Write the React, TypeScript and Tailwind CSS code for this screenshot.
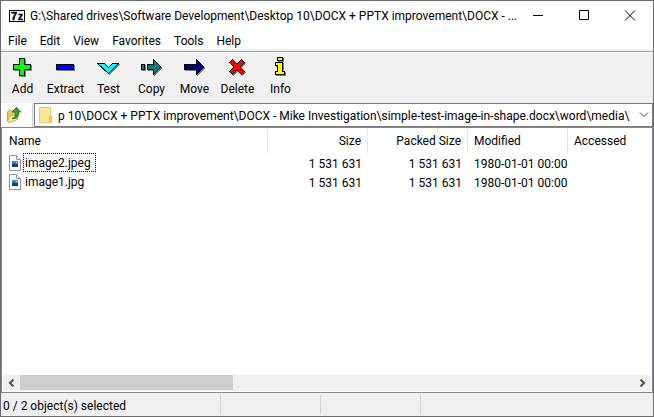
import { useState, type ReactNode } from "react";

const MENU = ["File", "Edit", "View", "Favorites", "Tools", "Help"];

const TOOLS = [
  { label: "Add", fill: "#00ff00", d: "M9.5 2.5h5v6h6v5h-6v6h-5v-6h-6v-5h6z" },
  { label: "Extract", fill: "#0000ff", d: "M3.5 8.5h17v5h-17z" },
  { label: "Test", fill: "#00ffff", d: "M1.5 7.5h7l4 4l4 -4h6l-10 10z" },
  { label: "Copy", fill: "#008080", d: "M2.5 8.5h3v5h-3zM8.5 8.5h6v-5l7 7v1l-7 7v-5h-6z" },
  { label: "Move", fill: "#000080", d: "M2.5 8.5h12v-5l7 7v1l-7 7v-5h-12z" },
  {
    label: "Delete",
    fill: "#ff0000",
    d: "M4.5 6.5l3 -3l4.5 4.5l4.5 -4.5l3 3l-4.5 4.5l4.5 4.5l-3 3l-4.5 -4.5l-4.5 4.5l-3 -3l4.5 -4.5z",
  },
  { label: "Info", fill: "#ffff00", d: "M9.5 1.5h5v3h-5zM7.5 6.5h7v9h2v3h-9v-3h2v-6h-2z" },
];

const FILES = [
  { name: "image2.jpeg", size: "1 531 631", packed: "1 531 631", modified: "1980-01-01 00:00" },
  { name: "image1.jpg", size: "1 531 631", packed: "1 531 631", modified: "1980-01-01 00:00" },
];

function ToolIcon({ d, fill }: { d: string; fill: string }) {
  return (
    <svg width="25" height="25" viewBox="0 0 25 25" shapeRendering="crispEdges" aria-hidden="true">
      <path d={d} fill="#808080" stroke="#808080" transform="translate(1 1)" />
      <path d={d} fill={fill} stroke="#000" />
    </svg>
  );
}

function AppIcon() {
  return (
    <svg width="16" height="16" viewBox="0 0 16 16" className="shrink-0" aria-hidden="true">
      <path d="M.5 2.500h15v11H.5z" fill="#fff" stroke="#000" shapeRendering="crispEdges" />
      <g fill="#000" stroke="#000" strokeWidth=".5" className="font-['Liberation_Sans',sans-serif] font-bold">
        <text x="2" y="12" fontSize="11">7</text>
        <text x="9" y="12" fontSize="10">z</text>
      </g>
    </svg>
  );
}

function FileIcon() {
  return (
    <svg width="12" height="16" viewBox="0 0 12 16" className="shrink-0" aria-hidden="true">
      <path d="M.5.5h7l4 4v11H.5z" fill="#fff" stroke="#929292" />
      <path d="M7.500.5v4h4" fill="#f2f2f2" stroke="#929292" />
      <path d="M3 6h6v6H3z" fill="#2f8fdc" />
      <path d="M3 12V9.500l2-1.500 2 1.500 1-1 1 1V12z" fill="#123f78" />
      <path d="M7 7h1v1H7z" fill="#d8f0ff" />
    </svg>
  );
}

function FolderUpIcon() {
  return (
    <svg width="16" height="18" viewBox="0 0 16 18" aria-hidden="true">
      <path d="M1.500 5.500l4-1.500 1 1.500 5-.5v8l-8 3.500-2-1z" fill="#efc95c" stroke="#cfa03a" />
      <path d="M1.500 15.500l2.500-6 8.500-1.500-2 6-7 2.500z" fill="#fbe9a0" stroke="#d5a93f" />
      <path d="M6 12.500c3.500-.5 3.500-3.500 3-6.500H6l4.500-4.500L14.500 6H12.500c.5 4-1 7-6.500 6.500z" fill="#35a52f" stroke="#1c7a22" />
    </svg>
  );
}

function FolderIcon() {
  return (
    <svg width="14" height="16" viewBox="0 0 14 16" className="shrink-0" aria-hidden="true">
      <path d="M.5.5h11v9h1v6H.5z" fill="#ffe594" stroke="#eccb6c" />
      <path d="M10.500 9.500h2v6h-2z" fill="#f7d775" stroke="#e5bd55" />
    </svg>
  );
}

function CaptionButton({ label, children }: { label: string; children: ReactNode }) {
  return (
    <button aria-label={label} className="flex w-[46px] items-center justify-center hover:bg-[#e5e5e5]">
      <svg width="12" height="12" viewBox="0 0 12 12" fill="none" stroke="#000" aria-hidden="true">
        {children}
      </svg>
    </button>
  );
}

export default function App() {
  const [path, setPath] = useState(
    "p 10\\DOCX + PPTX improvement\\DOCX - Mike Investigation\\simple-test-image-in-shape.docx\\word\\media\\",
  );
  const [focused, setFocused] = useState("image2.jpeg");

  const headClass = "border-r border-[#e5e5e5] py-0 px-[6px] font-normal";
  const cellClass = "px-[6px] pt-[2px] pb-0 leading-4 whitespace-nowrap";

  return (
    <main className="flex h-screen flex-col overflow-hidden border border-[#6b6b6b] bg-[#f0f0f0] font-['Roboto','Liberation_Sans',sans-serif] text-xs text-black">
      <header className="flex h-[30px] shrink-0 bg-white pl-2">
        <div className="flex min-w-0 flex-1 items-center gap-[5px] whitespace-nowrap">
          <AppIcon />
          <h1>G:\Shared drives\Software Development\Desktop 10\DOCX + PPTX improvement\DOCX - ...</h1>
        </div>
        <div className="flex shrink-0">
          <CaptionButton label="Minimize"><path d="M1 5.500h10" /></CaptionButton>
          <CaptionButton label="Maximize"><path d="M1.500.5h9v9h-9z" /></CaptionButton>
          <CaptionButton label="Close"><path d="M1 .5l10 10M11 .5l-10 10" /></CaptionButton>
        </div>
      </header>

      <nav className="flex h-[18px] shrink-0 items-end gap-[13px] bg-white px-[7px]">
        {MENU.map((item) => (
          <button key={item} className="leading-4 hover:bg-[#e5f3ff]">{item}</button>
        ))}
      </nav>

      <div className="mt-[2px] flex h-[52px] shrink-0 border-t border-[#a0a0a0]">
        <div className="flex flex-1 border-t border-white pt-[3px]">
          {TOOLS.map((tool) => (
            <button key={tool.label} className="flex w-[43px] flex-col items-center leading-4 hover:bg-[#e5f3ff]">
              <ToolIcon d={tool.d} fill={tool.fill} />
              {tool.label}
            </button>
          ))}
        </div>
      </div>

      <div className="flex h-6 shrink-0">
        <button aria-label="Up One Level" className="mr-px flex w-8 items-center justify-start border-r border-[#d0d0d0] bg-white pl-[5px]">
          <FolderUpIcon />
        </button>
        <div className="flex min-w-0 flex-1 items-center border border-[#7a7a7a] bg-white pl-1">
          <FolderIcon />
          <input
            aria-label="Path"
            value={path}
            onChange={(event) => setPath(event.target.value)}
            className="ml-[5px] min-w-0 flex-1 bg-transparent pt-px outline-none"
          />
          <button aria-label="Show path list" className="flex w-4 items-center justify-center self-stretch">
            <svg width="10" height="6" viewBox="0 0 10 6" fill="none" stroke="#444" aria-hidden="true">
              <path d="M1 .5l4 4l4 -4" />
            </svg>
          </button>
        </div>
      </div>

      <section className="flex min-h-0 flex-1 flex-col border border-[#828790] bg-white pt-px">
        <div className="min-h-0 flex-1 overflow-hidden">
          <table className="w-full min-w-[700px] table-fixed border-separate border-spacing-0 text-left">
            <colgroup>
              <col className="w-[266px]" />
              <col className="w-[100px]" />
              <col className="w-[100px]" />
              <col className="w-[100px]" />
              <col />
            </colgroup>
            <thead>
              <tr className="h-6">
                <th className={`${headClass} pl-[7px]`}>Name</th>
                <th className={`${headClass} text-right`}>Size</th>
                <th className={`${headClass} text-right`}>Packed Size</th>
                <th className={headClass}>Modified</th>
                <th className={headClass}>Accessed</th>
              </tr>
            </thead>
            <tbody>
              {FILES.map((file) => (
                <tr key={file.name} className="h-[19px]" onClick={() => setFocused(file.name)}>
                  <td className="p-0 pl-[7px]">
                    <div className="flex items-center gap-[2px]">
                      <FileIcon />
                      <span
                        className={`border border-dotted pt-px pr-1 pl-px leading-4 ${focused === file.name ? "border-black" : "border-transparent"}`}
                      >
                        {file.name}
                      </span>
                    </div>
                  </td>
                  <td className={`${cellClass} text-right`}>{file.size}</td>
                  <td className={`${cellClass} text-right`}>{file.packed}</td>
                  <td className={cellClass}>{file.modified}</td>
                  <td />
                </tr>
              ))}
            </tbody>
          </table>
        </div>
        <div className="mx-px mb-px flex h-4 shrink-0 bg-[#f0f0f0]">
          <button aria-label="Scroll left" className="flex w-[17px] items-center justify-center">
            <svg width="7" height="8" viewBox="0 0 7 8" fill="none" stroke="#505050" strokeWidth="2" aria-hidden="true">
              <path d="M5.500 .5L2 4l3.500 3.500" />
            </svg>
          </button>
          <div className="flex-1">
            <div className="h-[15px] w-[213px] bg-[#cdcdcd]" />
          </div>
          <button aria-label="Scroll right" className="flex w-[17px] items-center justify-center">
            <svg width="7" height="8" viewBox="0 0 7 8" fill="none" stroke="#505050" strokeWidth="2" aria-hidden="true">
              <path d="M1.500 .5L5 4l-3.500 3.500" />
            </svg>
          </button>
        </div>
      </section>

      <footer className="flex h-[23px] shrink-0 items-stretch pt-[2px] pb-px leading-[22px]">
        <p className="w-[220px] border-r border-[#d7d7d7] pl-[2px]">0 / 2 object(s) selected</p>
        <div className="w-[100px] border-r border-[#d7d7d7]" />
        <div className="w-[100px] border-r border-[#d7d7d7]" />
        <div className="flex-1" />
      </footer>
    </main>
  );
}
